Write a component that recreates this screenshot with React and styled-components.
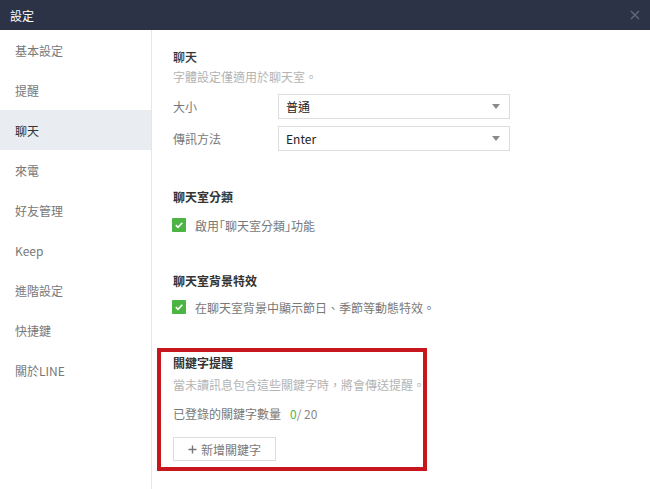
import React from "react";
import styled, { createGlobalStyle } from "styled-components";

const Global = createGlobalStyle`
  html, body { margin: 0; padding: 0; background: #fff; }
  body { font-family: "Noto Sans CJK TC", "Noto Sans", sans-serif; font-size: 12px; }
  * { box-sizing: border-box; }
`;

const Window = styled.div`
  width: 650px;
  height: 489px;
  display: flex;
  flex-direction: column;
  overflow: hidden;
  background: #fff;
`;

const TitleBar = styled.div`
  height: 30px;
  flex: none;
  background: #2c3346;
  color: #fff;
  display: flex;
  align-items: center;
  justify-content: space-between;
  padding: 0 8px 0 10px;
  font-size: 12px;
`;

const Close = styled.div`
  width: 14px;
  height: 14px;
  display: flex;
  align-items: center;
  justify-content: center;
`;

const Body = styled.div`
  flex: 1;
  display: flex;
  min-height: 0;
`;

const Sidebar = styled.nav`
  width: 152px;
  flex: none;
  border-right: 1px solid #e6e6e6;
  display: flex;
  flex-direction: column;
`;

const NavItem = styled.div`
  height: 40px;
  display: flex;
  align-items: center;
  padding-left: 15px;
  font-size: 12px;
  color: ${(p) => (p.$active ? "#333" : "#787878")};
  background: ${(p) => (p.$active ? "#e9ecf1" : "transparent")};
`;

const Main = styled.main`
  flex: 1;
  padding: 17px 0 0 21px;
  display: flex;
  flex-direction: column;
  gap: 36px;
`;

const Section = styled.section`
  display: flex;
  flex-direction: column;
  align-items: flex-start;
  position: relative;
`;

const Heading = styled.div`
  line-height: 20px;
  font-size: 12px;
  color: #333;
  font-weight: ${(p) => (p.$bold ? 700 : 500)};
`;

const Sub = styled.div`
  line-height: 20px;
  font-size: 12px;
  color: #b4b4b4;
  white-space: nowrap;
  margin-top: ${(p) => p.$mt || 0}px;
`;

const Rows = styled.div`
  display: flex;
  flex-direction: column;
  gap: 7px;
  margin-top: 7px;
`;

const Row = styled.div`
  display: flex;
  align-items: center;
`;

const Label = styled.div`
  width: 105px;
  color: #787878;
  font-size: 12px;
`;

const Select = styled.div`
  width: 232px;
  height: 25px;
  border: 1px solid #dcdcdc;
  display: flex;
  align-items: center;
  justify-content: space-between;
  padding: 0 9px 0 7px;
  color: #222;
  font-size: 12px;
`;

const Arrow = styled.span`
  width: 0;
  height: 0;
  border-left: 4px solid transparent;
  border-right: 4px solid transparent;
  border-top: 5px solid #8a8a8a;
`;

const CheckRow = styled.label`
  display: flex;
  align-items: center;
  gap: 9px;
  height: 20px;
  margin-top: ${(p) => p.$mt || 8}px;
  color: #787878;
  font-size: 12px;
  white-space: nowrap;
`;

const Bracket = styled.span`
  font-feature-settings: "halt";
`;

const Box = styled.span`
  width: 14px;
  height: 14px;
  background: #4bb543;
  border-radius: 1px;
  display: flex;
  align-items: center;
  justify-content: center;
  margin-left: -1px;
`;

const Count = styled.div`
  margin-top: 9px;
  line-height: 20px;
  color: #787878;
  display: flex;
  gap: 9px;
`;

const Num = styled.span`
  color: #888;
  b { color: #4bb543; font-weight: 400; }
`;

const AddButton = styled.button`
  margin-top: 13px;
  width: 103px;
  height: 24px;
  border: 1px solid #dcdcdc;
  background: #fff;
  color: #787878;
  font-family: inherit;
  font-size: 12px;
  display: flex;
  align-items: center;
  justify-content: center;
  gap: 4px;
  padding: 0;
`;

const Highlight = styled.div`
  position: absolute;
  left: -16px;
  top: -5px;
  width: 270px;
  height: 123px;
  border: 4px solid #c8161d;
  pointer-events: none;
`;

const navItems = ["基本設定", "提醒", "聊天", "來電", "好友管理", "Keep", "進階設定", "快捷鍵", "關於LINE"];

const Check = () => (
  <Box>
    <svg width="10" height="10" viewBox="0 0 10 10">
      <path d="M1.8 5.2 L4 7.3 L8.3 2.8" fill="none" stroke="#fff" strokeWidth="1.6" />
    </svg>
  </Box>
);

export default function App() {
  return (
    <Window>
      <Global />
      <TitleBar>
        <span>設定</span>
        <Close>
          <svg width="10" height="10" viewBox="0 0 10 10">
            <path d="M1 1 L9 9 M9 1 L1 9" stroke="#5d667a" strokeWidth="1.6" />
          </svg>
        </Close>
      </TitleBar>
      <Body>
        <Sidebar>
          {navItems.map((n) => (
            <NavItem key={n} $active={n === "聊天"}>{n}</NavItem>
          ))}
        </Sidebar>
        <Main>
          <Section>
            <Heading>聊天</Heading>
            <Sub>字體設定僅適用於聊天室。</Sub>
            <Rows>
              <Row>
                <Label>大小</Label>
                <Select>普通<Arrow /></Select>
              </Row>
              <Row>
                <Label>傳訊方法</Label>
                <Select>Enter<Arrow /></Select>
              </Row>
            </Rows>
          </Section>
          <Section>
            <Heading $bold>聊天室分類</Heading>
            <CheckRow $mt={8}>
              <Check />
              <span>啟用<Bracket>「</Bracket>聊天室分類<Bracket>」</Bracket>功能</span>
            </CheckRow>
          </Section>
          <Section>
            <Heading $bold>聊天室背景特效</Heading>
            <CheckRow $mt={6}><Check />在聊天室背景中顯示節日、季節等動態特效。</CheckRow>
          </Section>
          <Section>
            <Heading $bold>關鍵字提醒</Heading>
            <Sub $mt={2}>當未讀訊息包含這些關鍵字時，將會傳送提醒。</Sub>
            <Count>已登錄的關鍵字數量<Num><b>0</b>/ 20</Num></Count>
            <AddButton>
              <svg width="9" height="9" viewBox="0 0 9 9">
                <path d="M4.5 0.5 V8.5 M0.5 4.5 H8.5" stroke="#777" strokeWidth="1.4" />
              </svg>
              新增關鍵字
            </AddButton>
            <Highlight />
          </Section>
        </Main>
      </Body>
    </Window>
  );
}
